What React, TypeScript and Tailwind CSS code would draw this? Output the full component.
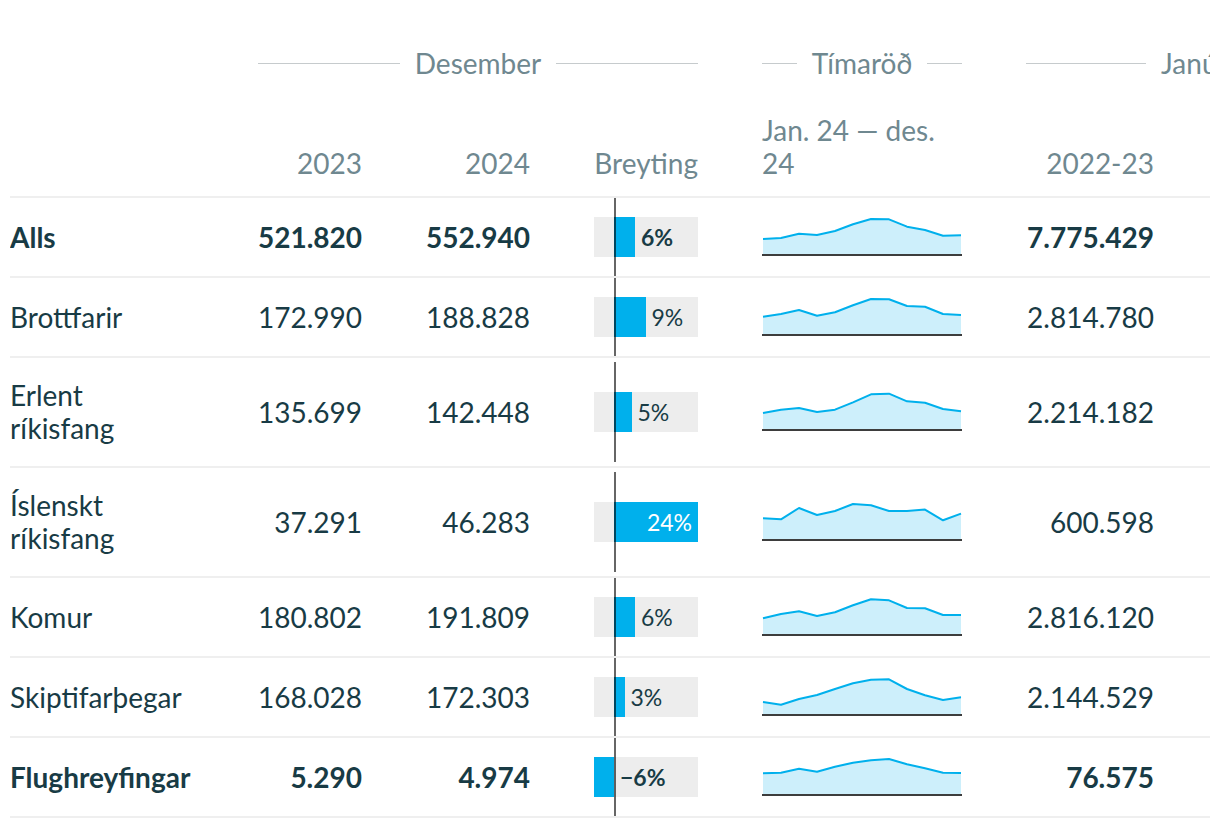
import React from 'react'

type Row = {
  label: string
  bold?: boolean
  tall?: boolean
  y2023: string
  y2024: string
  change: number
  spark: number[]
  p2223: string
  p2324: string
  change2: number
}

const rows: Row[] = [
  {
    label: 'Alls',
    bold: true,
    y2023: '521.820',
    y2024: '552.940',
    change: 6,
    spark: [16, 17, 21.3, 20, 24, 30.7, 36, 35.7, 28.3, 25, 19.3, 19.7],
    p2223: '7.775.429',
    p2324: '8.512.604',
    change2: 9,
  },
  {
    label: 'Brottfarir',
    y2023: '172.990',
    y2024: '188.828',
    change: 9,
    spark: [18.3, 21, 25, 19.3, 22.7, 29.7, 36, 35.7, 29, 28.3, 21, 20],
    p2223: '2.814.780',
    p2324: '3.011.402',
    change2: 7,
  },
  {
    label: 'Erlent ríkisfang',
    tall: true,
    y2023: '135.699',
    y2024: '142.448',
    change: 5,
    spark: [17, 20.3, 22, 18, 20.3, 27.7, 35.7, 36.3, 28.7, 27.3, 21, 18.7],
    p2223: '2.214.182',
    p2324: '2.365.210',
    change2: 7,
  },
  {
    label: 'Íslenskt ríkisfang',
    tall: true,
    y2023: '37.291',
    y2024: '46.283',
    change: 24,
    spark: [21.7, 20.7, 32, 25, 29, 36, 34.7, 29, 29, 30.4, 19.7, 26.4],
    p2223: '600.598',
    p2324: '646.192',
    change2: 8,
  },
  {
    label: 'Komur',
    y2023: '180.802',
    y2024: '191.809',
    change: 6,
    spark: [16.7, 21, 23.7, 19, 22.7, 29.7, 35.7, 34.7, 27, 26.7, 20, 20],
    p2223: '2.816.120',
    p2324: '3.010.951',
    change2: 7,
  },
  {
    label: 'Skiptifarþegar',
    y2023: '168.028',
    y2024: '172.303',
    change: 3,
    spark: [13, 10.3, 16, 20, 26, 31.7, 35.3, 35.7, 26, 19.7, 15, 17.7],
    p2223: '2.144.529',
    p2324: '2.490.251',
    change2: 16,
  },
  {
    label: 'Flughreyfingar',
    bold: true,
    y2023: '5.290',
    y2024: '4.974',
    change: -6,
    spark: [21.7, 22.3, 26.3, 23.3, 28.3, 32.3, 34.7, 36, 30.7, 26.7, 22.3, 22],
    p2223: '76.575',
    p2324: '80.112',
    change2: 5,
  },
]

function Sparkline({ values }: { values: number[] }) {
  const base = 38
  const pts = values.map((h, i) => [1 + (i * 198) / 11, base - h] as const)
  const line = pts.map(([x, y], i) => `${i === 0 ? 'M' : 'L'}${x.toFixed(1)},${y.toFixed(1)}`).join(' ')
  const area = `${line} L199,${base} L1,${base} Z`
  return (
    <svg width={200} height={40} viewBox="0 0 200 40" className="block">
      <path d={area} fill="#cdeffb" />
      <path d={line} fill="none" stroke="#00b0ec" strokeWidth={2} strokeLinejoin="round" />
      <rect x={0} y={37} width={200} height={2} fill="#3d3d3d" />
    </svg>
  )
}

function ChangeBar({ value, bold, tall }: { value: number; bold?: boolean; tall?: boolean }) {
  const zero = 20
  const full = value > 0 && value * 3.5 >= 84
  const width = value >= 0 ? Math.min(value * 3.5, 84) : Math.min(-value * 3.5, 20)
  const left = value >= 0 ? zero : zero - width
  const text = value < 0 ? `−${Math.abs(value)}%` : `${value}%`
  return (
    <div className="relative flex h-full w-[104px] items-center">
      <div className="relative h-[40px] w-[104px] bg-[#ededed]">
        <div className="absolute top-0 h-full bg-[#00b0ec]" style={{ left, width }} />
        {full ? (
          <span
            className={`absolute right-[6px] top-0 text-[23px] leading-[40px] text-white ${bold ? 'font-bold' : ''}`}
          >
            {text}
          </span>
        ) : (
          <span
            className={`absolute top-0 text-[23px] leading-[40px] text-[#183b45] ${bold ? 'font-bold' : ''}`}
            style={{ left: value >= 0 ? zero + width + 6 : zero + 6 }}
          >
            {text}
          </span>
        )}
      </div>
      <div
        className={`absolute left-[20px] w-[2px] bg-black/60 ${tall ? 'top-[4px] bottom-[4px]' : 'top-0 bottom-0'}`}
      />
    </div>
  )
}

function GroupLabel({ children }: { children: React.ReactNode }) {
  return (
    <div className="flex items-center gap-[15px]">
      <div className="h-px flex-1 bg-[#c6cbcd]" />
      <span className="whitespace-nowrap">{children}</span>
      <div className="h-px flex-1 bg-[#c6cbcd]" />
    </div>
  )
}

export default function App() {
  return (
    <div
      className="min-h-[828px] bg-white px-[10px] text-[28px] leading-[33px] text-[#183b45]"
      style={{ fontFamily: 'Lato, "Open Sans", sans-serif' }}
    >
      <div className="w-[1200px] overflow-hidden">
        {/* group header */}
        <div className="flex h-[96px] w-max items-end pb-[16px] text-[#6f8890]">
          <div className="w-[184px] shrink-0" />
          <div className="w-[504px] shrink-0 pl-[64px]">
            <GroupLabel>Desember</GroupLabel>
          </div>
          <div className="w-[264px] shrink-0 pl-[64px]">
            <GroupLabel>Tímaröð</GroupLabel>
          </div>
          <div className="w-[552px] shrink-0 pl-[64px]">
            <GroupLabel>Janúar–desember</GroupLabel>
          </div>
        </div>

        {/* column header */}
        <div className="flex h-[102px] w-max items-end border-b-2 border-[#efefef] pb-[16px] text-[#6f8890]">
          <div className="w-[184px] shrink-0" />
          <div className="w-[168px] shrink-0 pl-[64px] text-right">2023</div>
          <div className="w-[168px] shrink-0 pl-[64px] text-right">2024</div>
          <div className="w-[168px] shrink-0 pl-[64px] text-right">Breyting</div>
          <div className="w-[264px] shrink-0 pl-[64px]">Jan. 24 — des. 24</div>
          <div className="w-[192px] shrink-0 pl-[64px] text-right">2022-23</div>
          <div className="w-[192px] shrink-0 pl-[64px] text-right">2023-24</div>
          <div className="w-[168px] shrink-0 pl-[64px] text-right">Breyting</div>
        </div>

        {rows.map((r) => (
          <div
            key={r.label}
            className={`flex w-max items-center border-b-2 border-[#efefef] ${r.tall ? 'h-[110px]' : 'h-[80px]'} ${
              r.bold ? 'font-bold' : ''
            }`}
          >
            <div className="w-[184px] shrink-0">
              <div className="max-w-[176px]">{r.label}</div>
            </div>
            <div className="w-[168px] shrink-0 pl-[64px] text-right">{r.y2023}</div>
            <div className="w-[168px] shrink-0 pl-[64px] text-right">{r.y2024}</div>
            <div className="h-full w-[168px] shrink-0 pl-[64px]">
              <ChangeBar value={r.change} bold={r.bold} tall={r.tall} />
            </div>
            <div className="w-[264px] shrink-0 pl-[64px]">
              <Sparkline values={r.spark} />
            </div>
            <div className="w-[192px] shrink-0 pl-[64px] text-right">{r.p2223}</div>
            <div className="w-[192px] shrink-0 pl-[64px] text-right">{r.p2324}</div>
            <div className="h-full w-[168px] shrink-0 pl-[64px]">
              <ChangeBar value={r.change2} bold={r.bold} tall={r.tall} />
            </div>
          </div>
        ))}
      </div>
    </div>
  )
}
